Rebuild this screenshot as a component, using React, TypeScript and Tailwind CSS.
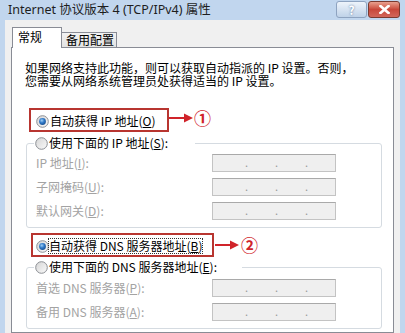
const font = { fontFamily: '"Noto Sans CJK SC", "Noto Sans", sans-serif' }

const Radio = ({ checked }: { checked?: boolean }) => (
  <svg width="13" height="13" viewBox="0 0 13 13" className="shrink-0">
    <defs>
      <linearGradient id="rbg" x1="0" y1="0" x2="1" y2="1">
        <stop offset="0" stopColor="#d4d4d4" />
        <stop offset="1" stopColor="#fbfbfb" />
      </linearGradient>
      <radialGradient id="rdot" cx="0.4" cy="0.35" r="0.7">
        <stop offset="0" stopColor="#9fd0f6" />
        <stop offset="0.5" stopColor="#2f78c8" />
        <stop offset="1" stopColor="#1a4f8f" />
      </radialGradient>
    </defs>
    <circle cx="6.5" cy="6.5" r="5.8" fill="url(#rbg)" stroke="#8c8f94" strokeWidth="1" />
    {checked && <circle cx="6.5" cy="6.5" r="3.4" fill="url(#rdot)" />}
  </svg>
)

const Arrow = () => (
  <svg width="24" height="10" viewBox="0 0 24 10" className="shrink-0">
    <line x1="0" y1="5" x2="16" y2="5" stroke="#d0242a" strokeWidth="2" />
    <polygon points="15,0.5 24,5 15,9.5" fill="#d0242a" />
  </svg>
)

const IpBox = () => (
  <div className="flex h-[18px] w-[124px] border border-[#c3c3c3] border-t-[#a9a9a9] bg-[#efefef] pl-[32px] text-[11px] leading-[14px] text-[#9a9a9a]">
    {[0, 1, 2].map((i) => (
      <span key={i} className="w-[31px]">.</span>
    ))}
  </div>
)

const Row = ({ label }: { label: React.ReactNode }) => (
  <div className="flex h-[18px] items-center">
    <div className="w-[176px] text-[12px] leading-[14px] text-[#a3a3a3]">{label}</div>
    <IpBox />
  </div>
)

export default function App() {
  return (
    <div className="flex h-[333px] w-[405px] flex-col overflow-hidden bg-[#c1d6ee]" style={font}>
      {/* title bar */}
      <div className="flex h-[20px] shrink-0 items-start pl-[8px] pr-[5px]">
        <div className="pt-[2px] text-[12.5px] leading-[16px] text-[#1e1e1e]" style={{ fontFamily: '"Noto Sans", "Noto Sans CJK SC", sans-serif' }}>
          Internet 协议版本 4 (TCP/IPv4) 属性
        </div>
        <div className="ml-auto mt-[1px] flex gap-[1px]">
          <div className="flex h-[17px] w-[31px] items-center justify-center rounded-[3px] border border-[#8ea3c0] bg-gradient-to-b from-[#eef4fb] to-[#bfd2e8] text-[12px] font-bold leading-none text-white [text-shadow:0_0_2px_#4a6890]">
            ?
          </div>
          <div className="flex h-[17px] w-[32px] items-center justify-center rounded-[3px] border border-[#7a3a30] bg-gradient-to-b from-[#e8a08f] via-[#c8473a] to-[#d2665a]">
            <svg width="11" height="9" viewBox="0 0 11 9">
              <path d="M1.5 1 L9.5 8 M9.5 1 L1.5 8" stroke="#fff" strokeWidth="2.6" strokeLinecap="square" />
            </svg>
          </div>
        </div>
      </div>

      {/* body */}
      <div className="mx-[5px] flex flex-1 flex-col bg-[#f0f0f0] pt-[7px]">
        {/* tabs */}
        <div className="relative z-10 mb-[-1px] ml-[7px] flex items-end">
          <div className="h-[21px] w-[50px] border border-b-0 border-[#898c95] bg-white pl-[5px] pt-[2px] text-[12px] leading-[14px] text-black">
            常规
          </div>
          <div className="mb-[1px] h-[15px] w-[55px] border-r border-t border-[#898c95] bg-gradient-to-b from-[#f2f2f2] to-[#e3e3e3] pl-[4px] text-[12px] leading-[14px] text-black">
            备用配置
          </div>
        </div>

        {/* panel */}
        <div className="ml-[6px] flex w-[383px] flex-1 flex-col border border-[#898c95] bg-white pl-[14px] pt-[13px] text-[12px] text-black">
          <div className="ml-[-1px] flex flex-col">
            <div className="h-[13px] leading-[13px]">如果网络支持此功能，则可以获取自动指派的 IP 设置。否则，</div>
            <div className="h-[13px] leading-[13px]">您需要从网络系统管理员处获得适当的 IP 设置。</div>
          </div>

          <div className="ml-[3px] mt-[21px] flex items-start">
            <div className="flex h-[24px] w-[140px] items-center gap-[1px] border-2 border-[#b83530] pl-[5px] pt-[2px]">
              <Radio checked />
              <span className="leading-[14px]">
                自动获得 IP 地址(<u>O</u>)
              </span>
            </div>
            <div className="mt-[1px] flex items-center">
              <Arrow />
              <span className="ml-[1px] text-[17px] font-bold leading-[18px] text-[#d0242a]">①</span>
            </div>
          </div>

          <fieldset className="mt-[3px] w-[356px] rounded-[3px] border border-[#d5dbe1] px-[9px]">
            <legend className="ml-[-2px] flex h-[16px] items-center gap-[1px] pl-[1px] pr-[27px]">
              <Radio />
              <span className="leading-[14px]">
                使用下面的 IP 地址(<u>S</u>):
              </span>
            </legend>
            <div className="flex flex-col gap-[6px] pb-[7px] pt-[3px]">
              <Row label={<>IP 地址(<u>I</u>):</>} />
              <Row label={<>子网掩码(<u>U</u>):</>} />
              <Row label={<>默认网关(<u>D</u>):</>} />
            </div>
          </fieldset>

          <div className="ml-[5px] mt-[5px] flex items-center">
            <div className="flex h-[24px] w-[183px] items-center border-2 border-[#b83530] pl-[3px] pt-[2px]">
              <Radio checked />
              <span className="outline-1 outline-dotted outline-[#333] leading-[14px]">
                自动获得 DNS 服务器地址(<u>B</u>)
              </span>
            </div>
            <div className="ml-[1px] flex items-center">
              <Arrow />
              <span className="ml-[2px] text-[17px] font-bold leading-[18px] text-[#d0242a]">②</span>
            </div>
          </div>

          <fieldset className="mt-[2px] w-[356px] rounded-[3px] border border-[#d5dbe1] px-[9px]">
            <legend className="ml-[-2px] flex h-[16px] items-center gap-[1px] pl-[1px] pr-[25px]">
              <Radio />
              <span className="leading-[14px]">
                使用下面的 DNS 服务器地址(<u>E</u>):
              </span>
            </legend>
            <div className="flex flex-col gap-[6px] pb-[7px] pt-[4px]">
              <Row label={<>首选 DNS 服务器(<u>P</u>):</>} />
              <Row label={<>备用 DNS 服务器(<u>A</u>):</>} />
            </div>
          </fieldset>
        </div>
      </div>
    </div>
  )
}
